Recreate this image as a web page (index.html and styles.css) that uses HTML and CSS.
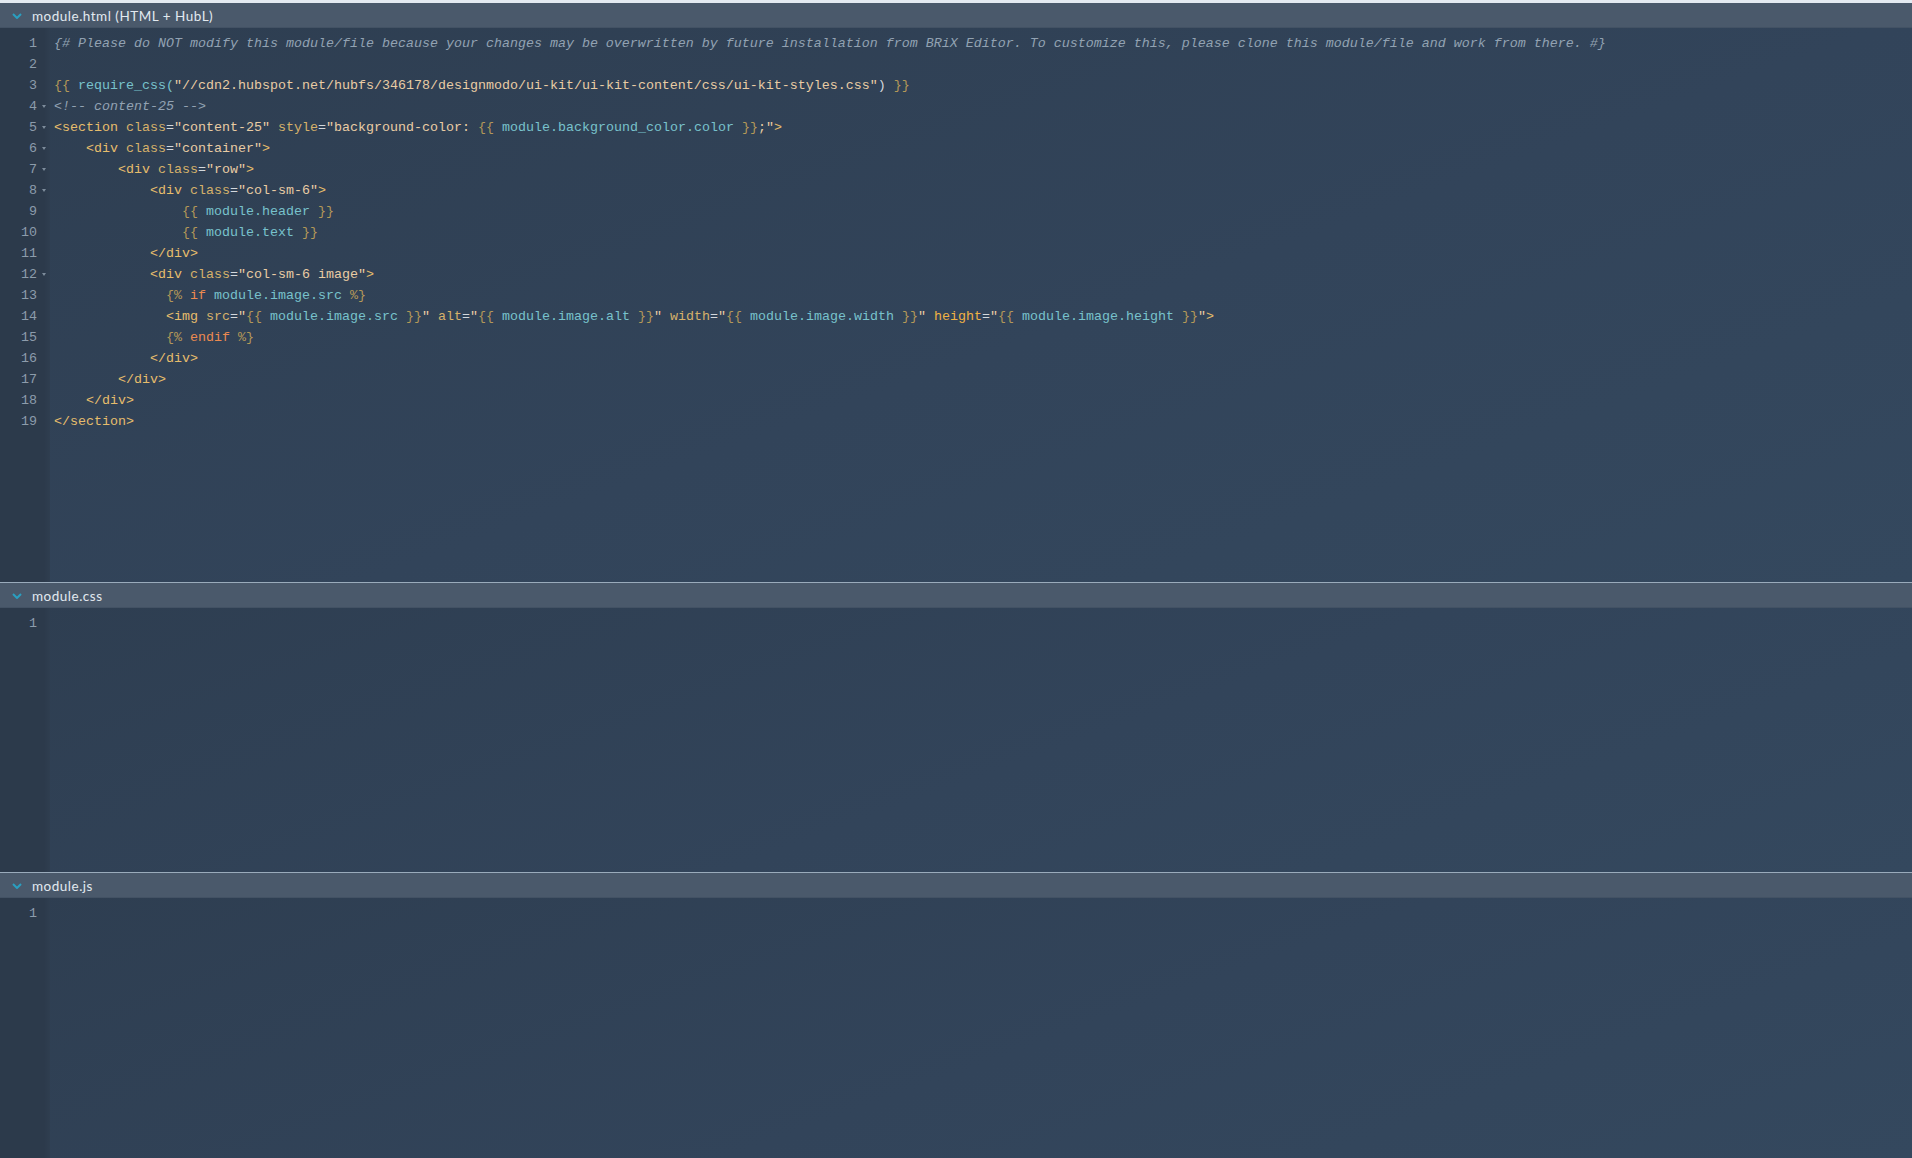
FILE: index.html
```html
<!DOCTYPE html>
<html lang="en">
<head>
  <meta charset="UTF-8">
  <meta name="viewport" content="width=device-width, initial-scale=1.0">
  <title>Module editor</title>
  <link rel="stylesheet" href="styles.css">
</head>
<body>

  <div class="panel panel-html">
    <div class="panel-head">
      <svg class="chevron" width="10" height="6" viewBox="0 0 10 6"><polyline points="1,1 5,5 9,1" fill="none" stroke="#2a9fc0" stroke-width="2"/></svg>
      <span>module.html (HTML + HubL)</span>
    </div>
    <div class="editor">
      <div class="gutter">
        <div class="ln">1</div>
        <div class="ln">2</div>
        <div class="ln">3</div>
        <div class="ln fold">4</div>
        <div class="ln fold">5</div>
        <div class="ln fold">6</div>
        <div class="ln fold">7</div>
        <div class="ln fold">8</div>
        <div class="ln">9</div>
        <div class="ln">10</div>
        <div class="ln">11</div>
        <div class="ln fold">12</div>
        <div class="ln">13</div>
        <div class="ln">14</div>
        <div class="ln">15</div>
        <div class="ln">16</div>
        <div class="ln">17</div>
        <div class="ln">18</div>
        <div class="ln">19</div>
      </div>
      <div class="code">
        <div class="line"><span class="cm">{# Please do NOT modify this module/file because your changes may be overwritten by future installation from BRiX Editor. To customize this, please clone this module/file and work from there. #}</span></div>
        <div class="line"> </div>
        <div class="line"><span class="hb">{{</span> <span class="vr">require_css(</span><span class="st">"//cdn2.hubspot.net/hubfs/346178/designmodo/ui-kit/ui-kit-content/css/ui-kit-styles.css"</span><span class="op">)</span> <span class="hb">}}</span></div>
        <div class="line"><span class="cm">&lt;!-- content-25 --&gt;</span></div>
        <div class="line"><span class="tg">&lt;section</span> <span class="at">class</span><span class="op">=</span><span class="st">"content-25"</span> <span class="at">style</span><span class="op">=</span><span class="st">"background-color: </span><span class="hb">{{</span> <span class="vr">module.background_color.color</span> <span class="hb">}}</span><span class="st">;"</span><span class="tg">&gt;</span></div>
        <div class="line">    <span class="tg">&lt;div</span> <span class="at">class</span><span class="op">=</span><span class="st">"container"</span><span class="tg">&gt;</span></div>
        <div class="line">        <span class="tg">&lt;div</span> <span class="at">class</span><span class="op">=</span><span class="st">"row"</span><span class="tg">&gt;</span></div>
        <div class="line">            <span class="tg">&lt;div</span> <span class="at">class</span><span class="op">=</span><span class="st">"col-sm-6"</span><span class="tg">&gt;</span></div>
        <div class="line">                <span class="hb">{{</span> <span class="vr">module.header</span> <span class="hb">}}</span></div>
        <div class="line">                <span class="hb">{{</span> <span class="vr">module.text</span> <span class="hb">}}</span></div>
        <div class="line">            <span class="tg">&lt;/div&gt;</span></div>
        <div class="line">            <span class="tg">&lt;div</span> <span class="at">class</span><span class="op">=</span><span class="st">"col-sm-6 image"</span><span class="tg">&gt;</span></div>
        <div class="line">              <span class="hb">{%</span> <span class="kw">if</span> <span class="vr">module.image.src</span> <span class="hb">%}</span></div>
        <div class="line">              <span class="tg">&lt;img</span> <span class="at">src</span><span class="op">=</span><span class="st">"</span><span class="hb">{{</span> <span class="vr">module.image.src</span> <span class="hb">}}</span><span class="st">"</span> <span class="at">alt</span><span class="op">=</span><span class="st">"</span><span class="hb">{{</span> <span class="vr">module.image.alt</span> <span class="hb">}}</span><span class="st">"</span> <span class="at">width</span><span class="op">=</span><span class="st">"</span><span class="hb">{{</span> <span class="vr">module.image.width</span> <span class="hb">}}</span><span class="st">"</span> <span class="at hi">height</span><span class="op">=</span><span class="st">"</span><span class="hb">{{</span> <span class="vr">module.image.height</span> <span class="hb">}}</span><span class="st">"</span><span class="tg">&gt;</span></div>
        <div class="line">              <span class="hb">{%</span> <span class="kw">endif</span> <span class="hb">%}</span></div>
        <div class="line">            <span class="tg">&lt;/div&gt;</span></div>
        <div class="line">        <span class="tg">&lt;/div&gt;</span></div>
        <div class="line">    <span class="tg">&lt;/div&gt;</span></div>
        <div class="line"><span class="tg">&lt;/section&gt;</span></div>
      </div>
    </div>
  </div>

  <div class="panel panel-css">
    <div class="panel-head">
      <svg class="chevron" width="10" height="6" viewBox="0 0 10 6"><polyline points="1,1 5,5 9,1" fill="none" stroke="#2a9fc0" stroke-width="2"/></svg>
      <span>module.css</span>
    </div>
    <div class="editor">
      <div class="gutter">
        <div class="ln">1</div>
      </div>
      <div class="code"></div>
    </div>
  </div>

  <div class="panel panel-js">
    <div class="panel-head">
      <svg class="chevron" width="10" height="6" viewBox="0 0 10 6"><polyline points="1,1 5,5 9,1" fill="none" stroke="#2a9fc0" stroke-width="2"/></svg>
      <span>module.js</span>
    </div>
    <div class="editor">
      <div class="gutter">
        <div class="ln">1</div>
      </div>
      <div class="code"></div>
    </div>
  </div>

</body>
</html>
```

FILE: styles.css
```css
html, body {
  height: 100%;
}
body {
  margin: 0;
  background: #2f3f52;
  display: flex;
  flex-direction: column;
  overflow: hidden;
  border-top: 3px solid #e4eaf1;
  box-sizing: border-box;
}
.panel {
  display: flex;
  flex-direction: column;
}
.panel + .panel {
  border-top: 1px solid #9aabbb;
}
.panel-html {
  height: 579px;
}
.panel-css {
  height: 289px;
}
.panel-js {
  flex: 1;
}
.panel-head {
  height: 25px;
  flex: none;
  display: flex;
  align-items: center;
  background: #4a596b;
  border-bottom: 1px solid #435264;
  box-sizing: border-box;
  color: #e2e9f0;
  font-family: "Lato", "Open Sans", sans-serif;
  font-size: 13.5px;
  letter-spacing: 0.5px;
  padding-left: 12px;
  padding-top: 2px;
}
.chevron {
  margin-right: 10px;
}
.editor {
  flex: 1;
  display: flex;
  background: linear-gradient(160deg, #2e3e51 0%, #32445a 55%, #34485e 100%);
  font-family: "Courier New", "Liberation Mono", monospace;
  font-size: 13.33px;
  line-height: 21px;
}
.gutter {
  width: 50px;
  flex: none;
  background: linear-gradient(90deg, #2c3a4b 0%, #2c3a4b 88%, #2f3e50 100%);
  padding-top: 5px;
  box-sizing: border-box;
}
.ln {
  position: relative;
  text-align: right;
  padding-right: 13px;
  color: #8d9cab;
}
.ln.fold::after {
  content: "";
  position: absolute;
  right: 4px;
  top: 9px;
  border-left: 2.5px solid transparent;
  border-right: 2.5px solid transparent;
  border-top: 3px solid #7d8c9b;
}
.code {
  flex: 1;
  padding: 5px 0 0 4px;
  color: #d8dde2;
}
.line {
  height: 21px;
  white-space: pre;
}
.cm {
  color: #92a2b2;
  font-style: italic;
}
.tg {
  color: #e6bd6c;
}
.at {
  color: #d6b16a;
}
.at.hi {
  color: #f0b244;
}
.op {
  color: #d3d8dd;
}
.st {
  color: #e9cca4;
}
.hb {
  color: #b49858;
}
.vr {
  color: #78c2cc;
}
.kw {
  color: #ec8a50;
}
```
